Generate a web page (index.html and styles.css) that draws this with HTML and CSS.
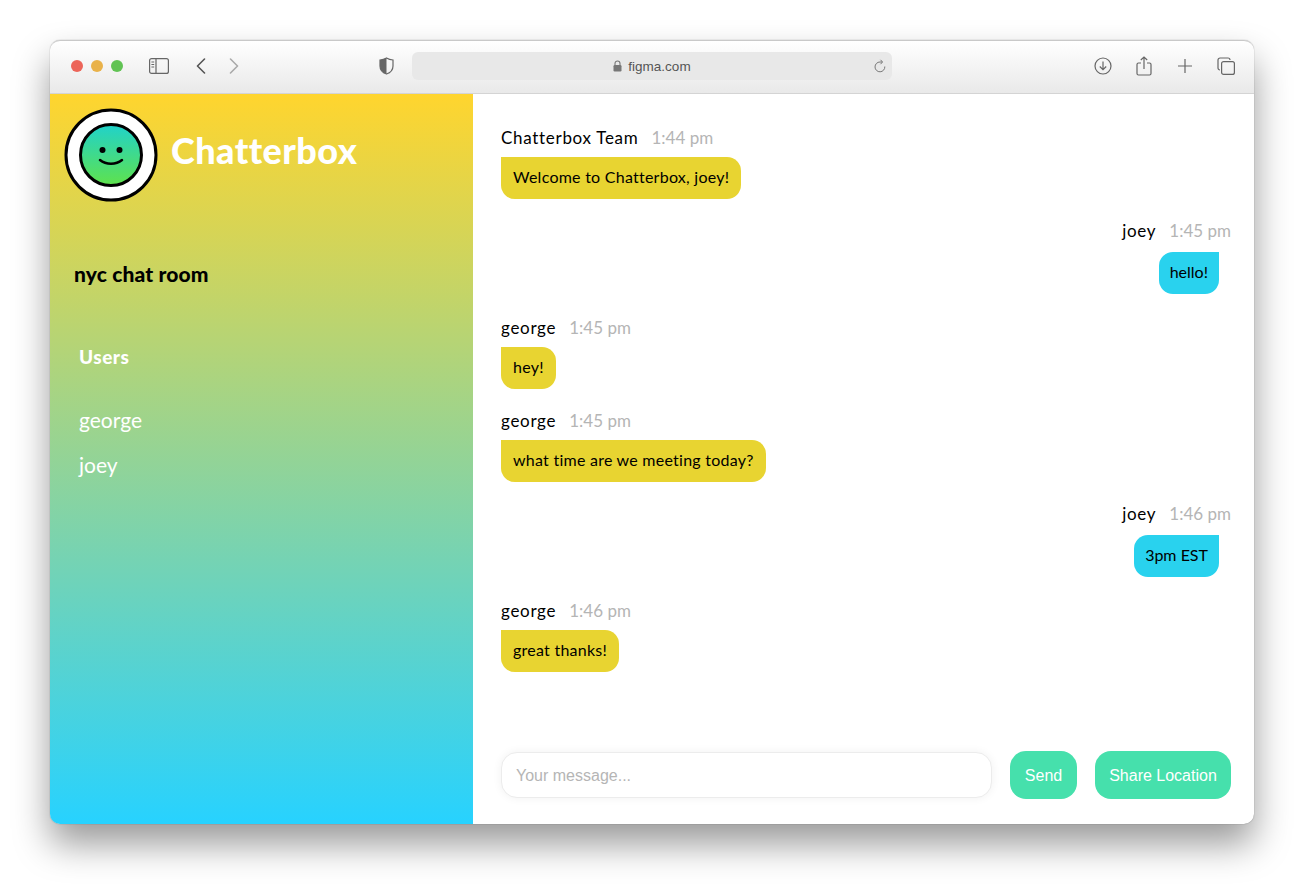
FILE: index.html
```html
<!DOCTYPE html>
<html lang="en">
<head>
  <meta charset="UTF-8" />
  <title>Chatterbox</title>
  <link rel="stylesheet" href="styles.css">
</head>
<body>
  <div class="window">

    <!-- Browser toolbar -->
    <div class="toolbar">
      <div class="lights">
        <span class="light red"></span>
        <span class="light yellow"></span>
        <span class="light green"></span>
      </div>
      <svg class="icon sidebar-icon" width="20" height="16" viewBox="0 0 20 16" fill="none" stroke="#666" stroke-width="1.2">
        <rect x="0.6" y="0.6" width="18.8" height="14.8" rx="2"/>
        <path d="M7 1v14M2.4 4h2.8M2.4 6.5h2.8M2.4 9h2.8"/>
      </svg>
      <svg class="icon back-icon" width="10" height="16" viewBox="0 0 10 16" fill="none" stroke="#555" stroke-width="1.6" stroke-linecap="round" stroke-linejoin="round">
        <path d="M8.5 1 1.5 8l7 7"/>
      </svg>
      <svg class="icon forward-icon" width="10" height="16" viewBox="0 0 10 16" fill="none" stroke="#aaa" stroke-width="1.6" stroke-linecap="round" stroke-linejoin="round">
        <path d="M1.5 1l7 7-7 7"/>
      </svg>
      <svg class="icon shield-icon" width="15" height="18" viewBox="0 0 15 18" fill="none">
        <path d="M7.5 1C5.5 2.200 3.500 2.800 1 3v6c0 4 3 6.800 6.500 8V1z" fill="#666"/>
        <path d="M7.500 1c2 1.200 4 1.800 6.500 2v6c0 4-3 6.800-6.500 8C4 15.800 1 13 1 9V3c2.500-.2 4.500-.8 6.500-2z" stroke="#666" stroke-width="1.200"/>
      </svg>
      <div class="url-bar">
        <div class="url">
          <svg width="9" height="12" viewBox="0 0 9 12" fill="none">
            <path d="M2 5.500V3.500a2.500 2.500 0 0 1 5 0v2" stroke="#777" stroke-width="1.100"/>
            <rect x="0.500" y="5" width="8" height="6.500" rx="1.200" fill="#777"/>
          </svg>
          <span>figma.com</span>
        </div>
        <svg class="reload" width="12" height="14" viewBox="0 0 12 14" fill="none" stroke="#777" stroke-width="1">
          <path d="M10.800 7.500A4.900 4.900 0 1 1 6 3h2"/>
          <path d="M6.500 0.800 8.600 3 6.500 5.200"/>
        </svg>
      </div>
      <div class="tools">
        <svg width="18" height="18" viewBox="0 0 18 18" fill="none" stroke="#666" stroke-width="1.200">
          <circle cx="9" cy="9" r="8"/>
          <path d="M9 4.500v8M5.800 9.500 9 12.700l3.200-3.200"/>
        </svg>
        <svg width="16" height="20" viewBox="0 0 16 20" fill="none" stroke="#666" stroke-width="1.200">
          <path d="M5 7H2.500A1.500 1.500 0 0 0 1 8.500v9A1.500 1.500 0 0 0 2.500 19h11a1.500 1.500 0 0 0 1.500-1.500v-9A1.500 1.500 0 0 0 13.500 7H11"/>
          <path d="M8 13V1M4.800 4 8 1l3.200 3"/>
        </svg>
        <svg width="16" height="16" viewBox="0 0 16 16" fill="none" stroke="#666" stroke-width="1.200">
          <path d="M8 1v14M1 8h14"/>
        </svg>
        <svg width="18" height="18" viewBox="0 0 18 18" fill="none" stroke="#666" stroke-width="1.200">
          <path d="M3 13A2 2 0 0 1 1 11V3a2 2 0 0 1 2-2h8a2 2 0 0 1 2 2"/>
          <rect x="4.600" y="4.600" width="12.800" height="12.800" rx="2"/>
        </svg>
      </div>
    </div>

    <div class="app">

      <!-- Sidebar -->
      <div class="sidebar">
        <div class="brand">
          <svg class="logo" width="94" height="94" viewBox="0 0 94 94">
            <defs>
              <linearGradient id="face" x1="0" y1="0" x2="0" y2="1">
                <stop offset="0" stop-color="#20d2cb"/>
                <stop offset="1" stop-color="#5fe24c"/>
              </linearGradient>
            </defs>
            <circle cx="47" cy="47" r="45" fill="#fff" stroke="#000" stroke-width="3"/>
            <circle cx="47" cy="47" r="30.500" fill="url(#face)" stroke="#000" stroke-width="3"/>
            <circle cx="38.500" cy="42" r="3" fill="#000"/>
            <circle cx="55.500" cy="42" r="3" fill="#000"/>
            <path d="M36 52c6 5 16 5 22 0" fill="none" stroke="#000" stroke-width="2.500" stroke-linecap="round"/>
          </svg>
          <span class="brand-name">Chatterbox</span>
        </div>
        <h2 class="room">nyc chat room</h2>
        <h3 class="users-title">Users</h3>
        <ul class="users">
          <li>george</li>
          <li>joey</li>
        </ul>
      </div>

      <!-- Chat -->
      <div class="chat">
        <div class="messages">
          <div class="message">
            <div class="meta"><span class="name">Chatterbox Team</span><span class="time">1:44 pm</span></div>
            <div class="bubble">Welcome to Chatterbox, joey!</div>
          </div>
          <div class="message mine">
            <div class="meta"><span class="name">joey</span><span class="time">1:45 pm</span></div>
            <div class="bubble">hello!</div>
          </div>
          <div class="message">
            <div class="meta"><span class="name">george</span><span class="time">1:45 pm</span></div>
            <div class="bubble">hey!</div>
          </div>
          <div class="message">
            <div class="meta"><span class="name">george</span><span class="time">1:45 pm</span></div>
            <div class="bubble">what time are we meeting today?</div>
          </div>
          <div class="message mine">
            <div class="meta"><span class="name">joey</span><span class="time">1:46 pm</span></div>
            <div class="bubble">3pm EST</div>
          </div>
          <div class="message">
            <div class="meta"><span class="name">george</span><span class="time">1:46 pm</span></div>
            <div class="bubble">great thanks!</div>
          </div>
        </div>

        <form class="composer">
          <input type="text" placeholder="Your message..." />
          <button type="button" class="send">Send</button>
          <button type="button" class="share">Share Location</button>
        </form>
      </div>
    </div>
  </div>
</body>
</html>
```

FILE: styles.css
```css
html, body {
  margin: 0;
  height: 884px;
  background: #fff;
  overflow: hidden;
}

body {
  font-family: 'Lato', sans-serif;
  color: #000;
}

.window {
  width: 1204px;
  height: 784px;
  margin: 40px 50px 0;
  border-radius: 10px;
  background: #fff;
  box-shadow: 0 0 1px rgba(0,0,0,0.5), 0 20px 36px rgba(0,0,0,0.4);
  display: flex;
  flex-direction: column;
}

/* Toolbar */
.toolbar {
  height: 54px;
  box-sizing: border-box;
  flex-shrink: 0;
  display: flex;
  align-items: center;
  padding: 0 0 2px 21px;
  border-radius: 10px 10px 0 0;
  background: linear-gradient(#ffffff, #e9e9e9);
  border-top: 1px solid #c9c9c9;
  border-bottom: 1px solid #d4d4d4;
}

.lights {
  display: flex;
  gap: 8px;
}

.light {
  width: 12px;
  height: 12px;
  border-radius: 50%;
}

.red { background: #ec6559; }
.yellow { background: #e9b24a; }
.green { background: #61c354; }

.icon {
  flex-shrink: 0;
}

.sidebar-icon { margin-left: 26px; }
.back-icon { margin-left: 27px; }
.forward-icon { margin-left: 23px; }
.shield-icon { margin-left: 140px; }

.url-bar {
  width: 480px;
  height: 28px;
  margin-left: 18px;
  border-radius: 6px;
  background: #e8e8e8;
  display: flex;
  align-items: center;
  justify-content: center;
  position: relative;
}

.url {
  display: flex;
  align-items: center;
  gap: 6px;
  font-family: 'Liberation Sans', sans-serif;
  font-size: 13.5px;
  color: #555;
}

.reload {
  position: absolute;
  right: 6px;
  top: 7px;
}

.tools {
  margin-left: 190px;
  display: grid;
  grid-auto-flow: column;
  grid-auto-columns: 41px;
  justify-items: center;
  align-items: center;
}

/* App */
.app {
  flex: 1;
  display: flex;
  min-height: 0;
}

.sidebar {
  width: 423px;
  flex-shrink: 0;
  border-radius: 0 0 0 10px;
  background: linear-gradient(#ffd52e, #27d2ff);
  box-sizing: border-box;
  padding: 14px 0 0 14px;
}

.brand {
  display: flex;
  align-items: center;
  gap: 13px;
}

.brand-name {
  font-size: 36px;
  font-weight: 900;
  letter-spacing: 0.45px;
  color: #fff;
  padding-bottom: 10px;
}

.room {
  margin: 58px 0 0 10px;
  font-size: 21px;
  font-weight: 900;
  letter-spacing: 0.15px;
  line-height: 28px;
}

.users-title {
  margin: 57px 0 0 15px;
  font-size: 19px;
  font-weight: 900;
  letter-spacing: 0.5px;
  line-height: 24px;
  color: #fff;
}

.users {
  list-style: none;
  margin: 39px 0 0 15px;
  padding: 0;
  font-size: 21px;
  color: #fff;
}

.users li {
  line-height: 24px;
  margin-bottom: 21px;
}

/* Chat */
.chat {
  flex: 1;
  display: flex;
  flex-direction: column;
  padding: 0 23px 25px 28px;
  min-width: 0;
}

.messages {
  flex: 1;
  padding-top: 32px;
}

.message {
  display: flex;
  flex-direction: column;
  align-items: flex-start;
  height: 93px;
}

.message.mine {
  align-items: flex-end;
  height: 97px;
}

.meta {
  display: flex;
  gap: 13px;
  height: 24px;
  line-height: 24px;
  font-size: 17px;
}

.name {
  letter-spacing: 0.7px;
}

.time {
  color: #b5b5b5;
}

.bubble {
  margin-top: 7px;
  height: 42px;
  line-height: 40px;
  padding: 0 12px;
  background: #e8d431;
  border-radius: 0 14px 14px 14px;
  font-size: 16px;
  letter-spacing: 0.25px;
}

.mine .bubble {
  margin-top: 9px;
  margin-right: 12px;
  padding: 0 11px;
  letter-spacing: 0;
  background: #29d2ee;
  border-radius: 14px 0 14px 14px;
}

/* Composer */
.composer {
  display: flex;
  gap: 18px;
  height: 48px;
}

.composer input {
  width: 491px;
  height: 46px;
  margin-top: 1px;
  box-sizing: border-box;
  padding: 1px 14px 0;
  border: 1px solid #ececec;
  border-radius: 16px;
  box-shadow: 0 0 10px rgba(0,0,0,0.06);
  font-family: 'Liberation Sans', sans-serif;
  font-size: 16px;
  outline: none;
}

.composer input::placeholder {
  color: #b5b5b5;
}

.composer button {
  border: none;
  border-radius: 16px;
  background: #46e0ac;
  color: #fff;
  font-family: 'Liberation Sans', sans-serif;
  font-size: 16px;
  padding: 1px 0 0;
}

.send { width: 67px; }
.share { width: 136px; }
```
